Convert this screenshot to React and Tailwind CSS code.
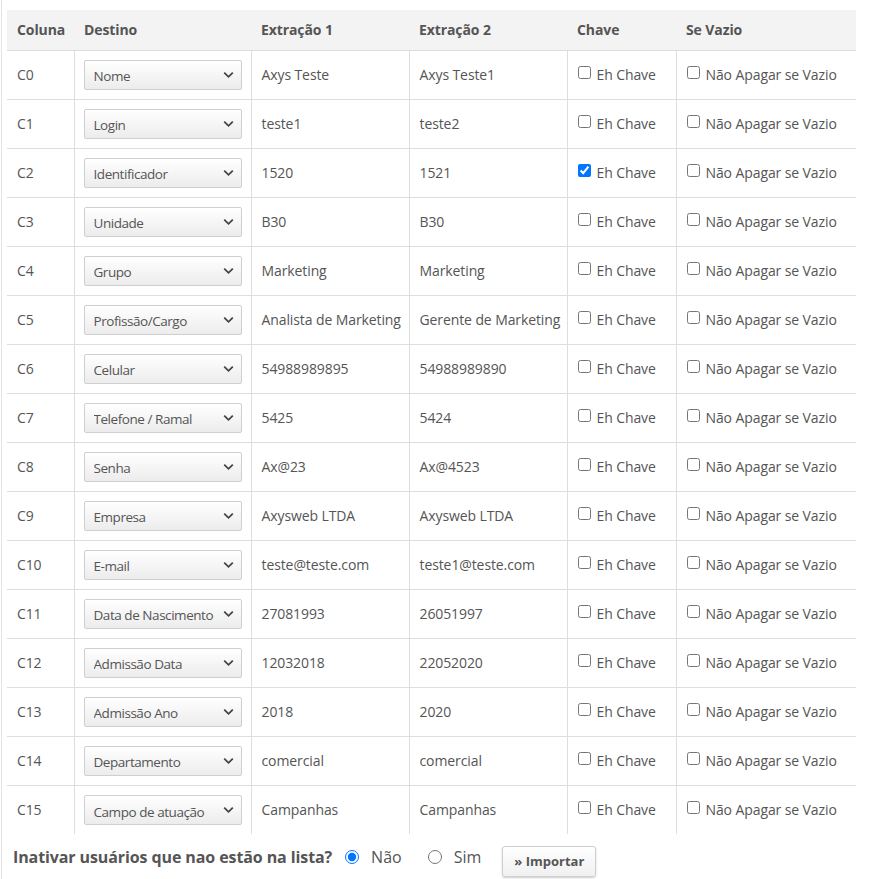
import React, { useState } from 'react';

const rows = [
  ['C0', 'Nome', 'Axys Teste', 'Axys Teste1'],
  ['C1', 'Login', 'teste1', 'teste2'],
  ['C2', 'Identificador', '1520', '1521'],
  ['C3', 'Unidade', 'B30', 'B30'],
  ['C4', 'Grupo', 'Marketing', 'Marketing'],
  ['C5', 'Profissão/Cargo', 'Analista de Marketing', 'Gerente de Marketing'],
  ['C6', 'Celular', '54988989895', '54988989890'],
  ['C7', 'Telefone / Ramal', '5425', '5424'],
  ['C8', 'Senha', 'Ax@23', 'Ax@4523'],
  ['C9', 'Empresa', 'Axysweb LTDA', 'Axysweb LTDA'],
  ['C10', 'E-mail', 'teste@teste.com', 'teste1@teste.com'],
  ['C11', 'Data de Nascimento', '27081993', '26051997'],
  ['C12', 'Admissão Data', '12032018', '22052020'],
  ['C13', 'Admissão Ano', '2018', '2020'],
  ['C14', 'Departamento', 'comercial', 'comercial'],
  ['C15', 'Campo de atuação', 'Campanhas', 'Campanhas'],
];

const destinos = rows.map((r) => r[1]);

function Chevron() {
  return (
    <svg className="pointer-events-none absolute right-[8px] top-1/2 -translate-y-1/2" width="11" height="7" viewBox="0 0 11 7" fill="none">
      <path d="M1.2 1.2 L5.5 5.3 L9.8 1.2" stroke="#444" strokeWidth="1.8" />
    </svg>
  );
}

export default function App() {
  const [inativar, setInativar] = useState('nao');

  return (
    <div className="min-h-screen bg-white ml-[1px] border-l border-[#e3e3e3] pl-[5px] pt-[10px] text-[#555] font-['Open_Sans','Noto_Sans',sans-serif]">
      <table className="w-[849px] border-collapse table-fixed text-[14px] tracking-[-0.1px]">
        <colgroup>
          <col className="w-[67px]" />
          <col className="w-[177px]" />
          <col className="w-[158px]" />
          <col className="w-[158px]" />
          <col className="w-[109px]" />
          <col className="w-[180px]" />
        </colgroup>
        <thead>
          <tr className="bg-[#f3f3f3] h-[40px] border-b border-[#dcdcdc]">
            <th className="text-left font-bold px-[10px]">Coluna</th>
            <th className="text-left font-bold px-[10px]">Destino</th>
            <th className="text-left font-bold px-[10px]">Extração 1</th>
            <th className="text-left font-bold px-[10px]">Extração 2</th>
            <th className="text-left font-bold px-[10px]">Chave</th>
            <th className="text-left font-bold px-[10px]">Se Vazio</th>
          </tr>
        </thead>
        <tbody>
          {rows.map(([col, dest, ex1, ex2], i) => (
            <tr key={col} className={i === 0 ? 'h-[49px]' : 'h-[49px] border-t border-[#dedede]'}>
              <td className="px-[10px]">{col}</td>
              <td className="px-[9px] border-l border-[#dedede]">
                <div className="relative w-[158px] mt-[1px]">
                  <select
                    defaultValue={dest}
                    className="appearance-none w-full h-[30px] pl-[9px] pr-[22px] pt-[3px] border border-[#cfcfcf] rounded-[2px] bg-gradient-to-b from-white to-[#ececec] text-[13.5px] tracking-[-0.45px] text-[#555] outline-none"
                  >
                    {destinos.map((d) => (
                      <option key={d} value={d}>{d}</option>
                    ))}
                  </select>
                  <Chevron />
                </div>
              </td>
              <td className="px-[10px] border-l border-[#dedede] whitespace-nowrap">{ex1}</td>
              <td className="px-[10px] border-l border-[#dedede] whitespace-nowrap">{ex2}</td>
              <td className="px-[10px] border-l border-[#dedede] whitespace-nowrap">
                <label className="inline-flex items-baseline gap-[6px]">
                  <input type="checkbox" defaultChecked={col === 'C2'} className="w-[13px] h-[13px] m-0 relative top-[-1px]" />
                  <span>Eh Chave</span>
                </label>
              </td>
              <td className="px-[10px] border-l border-[#dedede] whitespace-nowrap">
                <label className="inline-flex items-baseline gap-[6px]">
                  <input type="checkbox" className="w-[13px] h-[13px] m-0 relative top-[-1px]" />
                  <span>Não Apagar se Vazio</span>
                </label>
              </td>
            </tr>
          ))}
        </tbody>
      </table>

      <div className="flex items-center pl-[6px] h-[46px]">
        <span className="text-[16px] font-bold text-[#555] tracking-[-0.1px]">Inativar usuários que nao estão na lista?</span>
        <label className="flex items-center ml-[13px] text-[16px]">
          <input type="radio" name="inativar" checked={inativar === 'nao'} onChange={() => setInativar('nao')} className="w-[14px] h-[14px] m-0" />
          <span className="ml-[12px]">Não</span>
        </label>
        <label className="flex items-center ml-[26px] text-[16px]">
          <input type="radio" name="inativar" checked={inativar === 'sim'} onChange={() => setInativar('sim')} className="w-[14px] h-[14px] m-0" />
          <span className="ml-[12px]">Sim</span>
        </label>
        <button className="ml-[21px] mt-[9px] h-[31px] px-[11px] border border-[#cfcfcf] rounded-[3px] bg-gradient-to-b from-white to-[#f0f0f0] shadow-[0_1px_2px_rgba(0,0,0,0.2)] text-[13px] font-bold text-[#555]">
          » Importar
        </button>
      </div>
    </div>
  );
}
